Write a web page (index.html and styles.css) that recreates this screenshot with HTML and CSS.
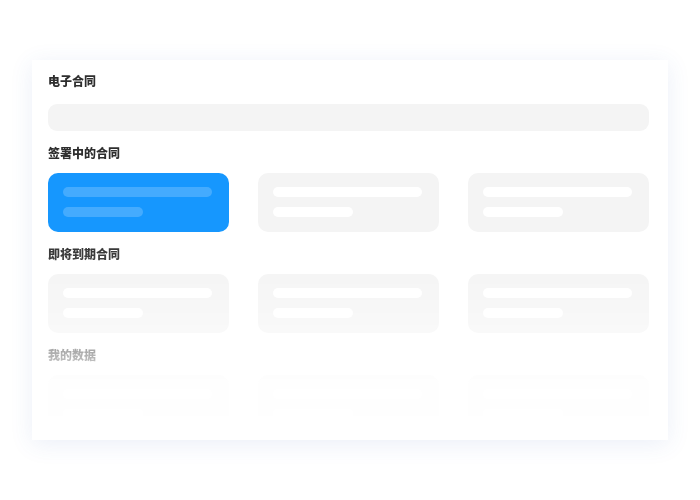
FILE: index.html
```html
<!DOCTYPE html>
<html lang="zh">
<head>
<meta charset="utf-8">
<link rel="stylesheet" href="styles.css">
</head>
<body>
<div class="panel">
  <div class="fade">
    <div class="title first">电子合同</div>
    <div class="search"></div>

    <div class="title">签署中的合同</div>
    <div class="row">
      <div class="tile active"><span class="line long"></span><span class="line short"></span></div>
      <div class="tile"><span class="line long"></span><span class="line short"></span></div>
      <div class="tile"><span class="line long"></span><span class="line short"></span></div>
    </div>

    <div class="title">即将到期合同</div>
    <div class="row">
      <div class="tile"><span class="line long"></span><span class="line short"></span></div>
      <div class="tile"><span class="line long"></span><span class="line short"></span></div>
      <div class="tile"><span class="line long"></span><span class="line short"></span></div>
    </div>

    <div class="title">我的数据</div>
    <div class="row">
      <div class="tile"><span class="line long"></span><span class="line short"></span></div>
      <div class="tile"><span class="line long"></span><span class="line short"></span></div>
      <div class="tile"><span class="line long"></span><span class="line short"></span></div>
    </div>
  </div>
</div>
</body>
</html>
```
FILE: styles.css
```css
html, body {
  margin: 0;
  padding: 0;
  background: #ffffff;
}
body {
  width: 700px;
  height: 500px;
  font-family: "Noto Sans CJK SC", "Noto Sans", sans-serif;
}
.panel {
  box-sizing: border-box;
  margin: 60px 0 0 32px;
  width: 636px;
  height: 380px;
  padding: 12px 19px 18px 16px;
  background: #ffffff;
  box-shadow: 0 4px 22px rgba(60, 100, 190, 0.10);
}
.fade {
  height: 350px;
  overflow: hidden;
  -webkit-mask-image: linear-gradient(to bottom, #000 0%, #000 45%, rgba(0,0,0,.85) 62%, rgba(0,0,0,.4) 80%, rgba(0,0,0,.12) 88%, rgba(0,0,0,.03) 100%);
  mask-image: linear-gradient(to bottom, #000 0%, #000 45%, rgba(0,0,0,.85) 62%, rgba(0,0,0,.4) 80%, rgba(0,0,0,.12) 88%, rgba(0,0,0,.03) 100%);
}
.title {
  height: 18px;
  line-height: 18px;
  font-size: 12px;
  font-weight: 900;
  color: #2e2e2e;
  margin: 13px 0 11px;
}
.title.first {
  margin-top: 0;
  margin-bottom: 14px;
}
.search {
  height: 27px;
  border-radius: 9px;
  background: #f4f4f4;
}
.row {
  display: grid;
  grid-template-columns: 181px 181px 181px;
  column-gap: 29px;
}
.tile {
  box-sizing: border-box;
  height: 59px;
  border-radius: 10px;
  background: #f4f4f4;
  padding: 14px 15px 0;
  display: flex;
  flex-direction: column;
  gap: 10px;
}
.tile.active {
  background: #1697fe;
}
.line {
  display: block;
  height: 10px;
  border-radius: 5px;
  background: #ffffff;
}
.line.long { width: 149px; }
.line.short { width: 80px; }
.tile.active .line {
  background: rgba(255, 255, 255, 0.2);
}
```
